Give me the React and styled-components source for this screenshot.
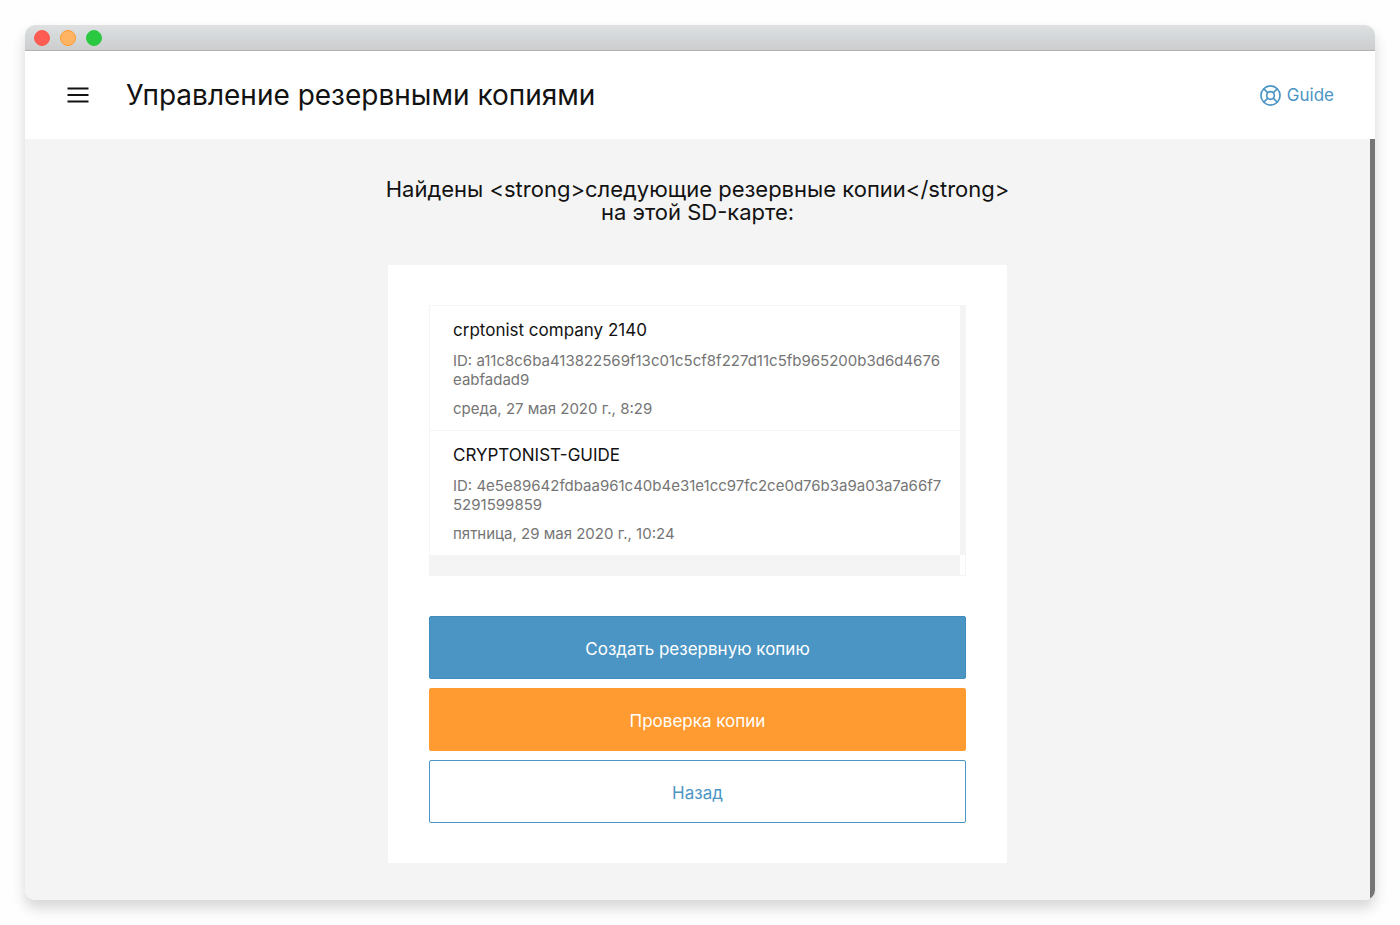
import React from 'react';
import styled, { createGlobalStyle } from 'styled-components';

const Blue = '#4b95c4';
const Orange = '#ff9b30';
const Gray = '#f4f4f4';

const GlobalStyle = createGlobalStyle`
  * {
    box-sizing: border-box;
  }
  body {
    margin: 0;
    background-color: #fefefe;
    color: #121212;
    font-family: Inter, 'Noto Sans', sans-serif;
  }
`;

const Desktop = styled.div`
  display: flex;
  min-height: 100vh;
  padding: 25px;
`;

const Window = styled.div`
  display: flex;
  flex-direction: column;
  flex: 1;
  min-width: 0;
  overflow: hidden;
  border-radius: 10px;
  background-color: #fff;
  box-shadow: 0 8px 14px rgba(0, 0, 0, 0.16);
`;

const TitleBar = styled.div`
  display: flex;
  align-items: center;
  gap: 10px;
  height: 26px;
  padding: 0 9px;
  border-bottom: 1px solid #b0b3b4;
  background: linear-gradient(#dfe1e1, #d4d8da 45%, #cdcdcd);
`;

const Light = styled.span`
  width: 16px;
  height: 16px;
  border: 1px solid ${({ $edge }) => $edge};
  border-radius: 50%;
  background-color: ${({ $color }) => $color};
`;

const Header = styled.header`
  display: flex;
  align-items: center;
  height: 88px;
  padding: 0 41px;
`;

const MenuButton = styled.button`
  display: flex;
  padding: 0;
  border: none;
  background: none;
  color: inherit;
  cursor: pointer;
`;

const Title = styled.h1`
  flex: 1;
  margin: 0 0 0 36px;
  font-size: 28px;
  font-weight: 400;
  line-height: 36px;
`;

const GuideLink = styled.a`
  display: flex;
  align-items: center;
  gap: 6px;
  color: ${Blue};
  font-size: 17px;
  line-height: 24px;
  text-decoration: none;
`;

const Body = styled.div`
  display: flex;
  flex: 1;
`;

const Content = styled.main`
  display: flex;
  flex-direction: column;
  align-items: center;
  flex: 1;
  min-width: 0;
  padding: 39px 20px 37px;
  background-color: ${Gray};
`;

const PageScroll = styled.div`
  width: 5px;
  background-color: #757575;
`;

const Message = styled.p`
  width: 100%;
  max-width: 640px;
  margin: 0 0 41px;
  font-size: 22px;
  line-height: 23px;
  text-align: center;
`;

const Card = styled.section`
  width: 100%;
  max-width: 619px;
  padding: 40px 41px;
  background-color: #fff;
`;

const BackupBox = styled.div`
  display: flex;
  margin-bottom: 40px;
  border: 1px solid ${Gray};
`;

const BackupList = styled.ul`
  flex: 1;
  min-width: 0;
  margin: 0;
  padding: 0 0 20px;
  background-color: ${Gray};
  list-style: none;
`;

const Track = styled.div`
  width: 5px;
  margin-bottom: 20px;
  background-color: ${Gray};
`;

const Backup = styled.li`
  padding: 13px 16px 12px 23px;
  background-color: #fff;
  & + & {
    border-top: 1px solid ${Gray};
  }
`;

const BackupName = styled.div`
  font-size: 17px;
  line-height: 22px;
`;

const BackupInfo = styled.div`
  margin-top: 10px;
  color: #757575;
  font-size: 15px;
  line-height: 19px;
  word-break: break-all;
`;

const Buttons = styled.div`
  display: flex;
  flex-direction: column;
  gap: 9px;
`;

const Button = styled.button`
  height: 63px;
  padding: 2px 20px 0;
  border: 1px solid ${({ $border }) => $border};
  border-radius: 2px;
  background-color: ${({ $bg }) => $bg};
  color: ${({ $color }) => $color};
  font-family: inherit;
  font-size: 17px;
  cursor: pointer;
`;

const backups = [
  {
    name: 'crptonist company 2140',
    id: 'a11c8c6ba413822569f13c01c5cf8f227d11c5fb965200b3d6d4676eabfadad9',
    date: 'среда, 27 мая 2020 г., 8:29',
  },
  {
    name: 'CRYPTONIST-GUIDE',
    id: '4e5e89642fdbaa961c40b4e31e1cc97fc2ce0d76b3a9a03a7a66f75291599859',
    date: 'пятница, 29 мая 2020 г., 10:24',
  },
];

const MenuIcon = () => (
  <svg width="24" height="24" viewBox="0 0 24 24" fill="none" stroke="currentColor" strokeWidth="2">
    <path d="M1.5 5.5h21M1.5 12h21M1.5 18.5h21" />
  </svg>
);

const GuideIcon = () => (
  <svg width="21" height="21" viewBox="1 1 22 22" fill="none" stroke="currentColor" strokeWidth="1.8">
    <circle cx="12" cy="12" r="10" />
    <circle cx="12" cy="12" r="4" />
    <path d="M4.93 4.93l4.24 4.24M14.83 14.83l4.24 4.24M14.83 9.17l4.24-4.24M4.93 19.07l4.24-4.24" />
  </svg>
);

const App = () => {
  return (
    <>
      <GlobalStyle />
      <Desktop>
        <Window>
          <TitleBar>
            <Light $color="#ff5c53" $edge="#fb5a50" />
            <Light $color="#ffb464" $edge="#ff9b30" />
            <Light $color="#2bc941" $edge="#2bc941" />
          </TitleBar>
          <Header>
            <MenuButton aria-label="Меню">
              <MenuIcon />
            </MenuButton>
            <Title>Управление резервными копиями</Title>
            <GuideLink href="#guide">
              <GuideIcon />
              Guide
            </GuideLink>
          </Header>
          <Body>
            <Content>
              <Message>
                {'Найдены <strong>следующие резервные копии</strong> на этой SD-карте:'}
              </Message>
              <Card>
                <BackupBox>
                  <BackupList>
                    {backups.map(({ name, id, date }) => (
                      <Backup key={id}>
                        <BackupName>{name}</BackupName>
                        <BackupInfo>{`ID: ${id}`}</BackupInfo>
                        <BackupInfo>{date}</BackupInfo>
                      </Backup>
                    ))}
                  </BackupList>
                  <Track />
                </BackupBox>
                <Buttons>
                  <Button $bg={Blue} $border="#3f8cbd" $color="#fff">
                    Создать резервную копию
                  </Button>
                  <Button $bg={Orange} $border={Orange} $color="#fff">
                    Проверка копии
                  </Button>
                  <Button $bg="#fff" $border={Blue} $color={Blue}>
                    Назад
                  </Button>
                </Buttons>
              </Card>
            </Content>
            <PageScroll />
          </Body>
        </Window>
      </Desktop>
    </>
  );
};

export default App;
